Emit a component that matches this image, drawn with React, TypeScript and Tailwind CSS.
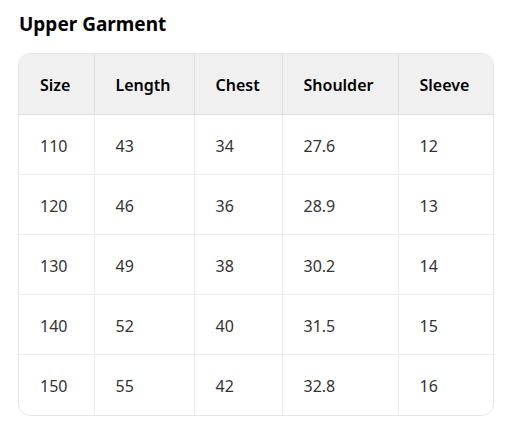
import React from "react";

const headers = ["Size", "Length", "Chest", "Shoulder", "Sleeve"];
const rows = [
  ["110", "43", "34", "27.6", "12"],
  ["120", "46", "36", "28.9", "13"],
  ["130", "49", "38", "30.2", "14"],
  ["140", "52", "40", "31.5", "15"],
  ["150", "55", "42", "32.8", "16"],
];
const widths = ["w-[75px]", "w-[100px]", "w-[88px]", "w-[116px]", "w-[95px]"];

export default function App() {
  return (
    <div
      className="w-[507px] h-[432px] bg-white px-[18px] pt-[10px]"
      style={{ fontFamily: '"Noto Sans", "Open Sans", sans-serif' }}
    >
      <h2 className="text-[19px] leading-[28px] font-bold text-black ml-[1px]">Upper Garment</h2>
      <div className="mt-[15px] w-[476px] rounded-[12px] border border-[#e6e6e6] overflow-hidden">
        <table className="w-full border-collapse table-fixed">
          <thead>
            <tr className="bg-[#f0f0f0]">
              {headers.map((h, i) => (
                <th
                  key={h}
                  className={`${widths[i]} h-[60px] pt-[3px] px-[21px] text-left text-[16px] font-semibold text-black border-b border-[#e0e0e0] ${i < 4 ? "border-r" : ""}`}
                >
                  {h}
                </th>
              ))}
            </tr>
          </thead>
          <tbody>
            {rows.map((r, ri) => (
              <tr key={ri}>
                {r.map((c, ci) => (
                  <td
                    key={ci}
                    className={`${ri < 4 ? "h-[60px] border-b" : "h-[61px]"} pt-[3px] px-[21px] text-[16px] text-[#333333] border-[#ebebeb] ${ci < 4 ? "border-r" : ""}`}
                  >
                    {c}
                  </td>
                ))}
              </tr>
            ))}
          </tbody>
        </table>
      </div>
    </div>
  );
}
